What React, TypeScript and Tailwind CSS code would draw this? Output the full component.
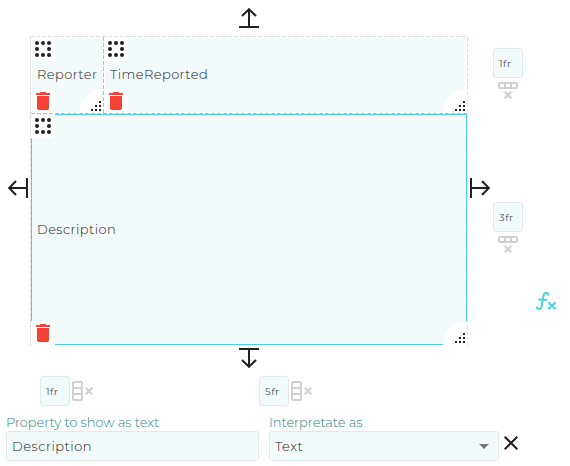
import React from "react";

function Handle() {
  return (
    <svg width="24" height="24" viewBox="0 0 24 24" className="absolute top-0 left-0 rounded-br-sm bg-white" fill="#212121">
      {[6, 12, 18].map((y) =>
        [6, 12, 18].map((x) => (x === 12 && y === 12 ? null : <circle key={`${x}-${y}`} cx={x} cy={y} r="2" />)),
      )}
    </svg>
  );
}

function Trash() {
  return (
    <svg width="24" height="24" viewBox="0 0 24 24" className="absolute bottom-0 left-0 rounded-tr-sm bg-white" fill="#f44336">
      <path d="M6 19c0 1.1.9 2 2 2h8c1.1 0 2-.9 2-2V7H6v12zM19 4h-3.5l-1-1h-5l-1 1H5v2h14V4z" />
    </svg>
  );
}

function Resize() {
  return (
    <svg width="24" height="24" viewBox="0 0 24 24" className="absolute right-0 bottom-0 rounded-tl-[24px] bg-white" fill="#212121" shapeRendering="crispEdges">
      <path d="M20 12h2v2h-2zM16 16h2v2h-2zM20 16h2v2h-2zM12 20h2v2h-2zM16 20h2v2h-2zM20 20h2v2h-2z" />
    </svg>
  );
}

function Cell({ label, className }: { label: string; className: string }) {
  return (
    <div className={`relative flex items-center border bg-[#f2fafc] pl-[5px] ${className}`}>
      <span className="text-[13px] font-light tracking-[0.42px] whitespace-nowrap text-[#212121]">{label}</span>
      <div className="absolute -inset-px">
        <Handle />
        <Trash />
        <Resize />
      </div>
    </div>
  );
}

function Arrow({ className }: { className: string }) {
  return (
    <svg width="20" height="20" viewBox="0 0 20 20" className={`shrink-0 ${className}`} fill="none" stroke="#212121" strokeWidth="2">
      <path d="M0 19h20M10 18V1.5M3 8l7-6.8L17 8" />
    </svg>
  );
}

function Fr({ value }: { value: string }) {
  return (
    <div className="flex h-[30px] w-[30px] shrink-0 items-center rounded-[3px] border border-[#e0eaec] bg-[#f2fafc] pl-[5px] text-[10px] tracking-[0.5px] text-[#4c5254]">
      {value}
    </div>
  );
}

function Cross() {
  return (
    <svg width="8" height="8" viewBox="0 0 8 8" className="shrink-0" stroke="#d0d0d0" strokeWidth="2">
      <path d="M.7.7l6.6 6.6M7.3.7L.7 7.3" />
    </svg>
  );
}

function RowTrack({ value }: { value: string }) {
  return (
    <div className="flex w-[30px] flex-col items-center">
      <Fr value={value} />
      <svg width="20" height="7" viewBox="0 0 20 7" className="mt-1 mb-0.5" fill="none" stroke="#d0d0d0" strokeWidth="2">
        <rect x="1" y="1" width="18" height="5" rx="1" />
        <path d="M7 1v5M13 1v5" />
      </svg>
      <Cross />
    </div>
  );
}

function ColumnTrack({ value }: { value: string }) {
  return (
    <div className="flex h-[30px] items-center">
      <Fr value={value} />
      <svg width="11" height="20" viewBox="0 0 11 20" className="mr-0.5 ml-0.5" fill="none" stroke="#d0d0d0" strokeWidth="2">
        <rect x="1" y="1" width="9" height="18" rx="1" />
        <path d="M1 7h9M1 13h9" />
      </svg>
      <Cross />
    </div>
  );
}

const dashX = "bg-[repeating-linear-gradient(90deg,#dedede_0_4px,transparent_4px_6px)]";
const dashY = "bg-[repeating-linear-gradient(180deg,#dedede_0_4px,transparent_4px_6px)]";

export default function App() {
  return (
    <div className="h-[466px] w-[570px] overflow-hidden bg-white font-[Montserrat,Inter,sans-serif]">
      <div className="flex h-9 w-[498px] justify-center pt-2">
        <Arrow className="" />
      </div>
      <div className="flex h-[310px]">
        <div className="flex w-[30px] shrink-0 items-start pt-[142px] pl-2">
          <Arrow className="-rotate-90" />
        </div>
        <div className="grid w-[438px] shrink-0 grid-cols-[1px_72px_1px_363px_1px] grid-rows-[1px_76px_1px_231px_1px]">
          <div className={`col-span-5 ${dashX}`} />
          <div className={`row-span-4 ${dashY}`} />
          <Cell label="Reporter" className="border-white" />
          <div className="bg-[repeating-linear-gradient(180deg,#bdbdbd_0_4px,transparent_4px_6px)]" />
          <Cell label="TimeReported" className="border-white" />
          <div className={`row-span-3 ${dashY}`} />
          <div className="col-span-3 bg-[repeating-linear-gradient(90deg,#bdbdbd_0_4px,transparent_4px_6px)]" />
          <Cell label="Description" className="col-span-3 border-[#4dd0e1]" />
          <div className={`col-span-5 ${dashX}`} />
        </div>
        <div className="flex w-[25px] shrink-0 items-start pt-[142px] pl-0.5">
          <Arrow className="rotate-90" />
        </div>
        <div className="flex w-[30px] shrink-0 flex-col gap-[103px] pt-3">
          <RowTrack value="1fr" />
          <RowTrack value="3fr" />
        </div>
        <div className="pt-[255px] pl-3">
          <svg width="22" height="22" viewBox="0 0 22 22" fill="none" stroke="#4dd0e1" strokeWidth="2">
            <path d="M13.6 4.6C13.6 1.4 9.2 1.2 8.6 4.4L6.6 15C6.1 18.6 2.2 18.8 1.6 15.8M3.3 8.8h9M13.2 11.2l7.4 7M20.6 11.2l-7.4 7" />
          </svg>
        </div>
      </div>
      <div className="flex h-[30px] w-[498px] justify-center pt-0.5">
        <Arrow className="rotate-180" />
      </div>
      <div className="flex gap-[166px] pl-10">
        <ColumnTrack value="1fr" />
        <ColumnTrack value="5fr" />
      </div>
      <div className="flex items-end pt-2 pl-1.5">
        <div className="w-[253px]">
          <div className="h-[17px] text-[13px] leading-4 font-light tracking-[-0.04px] whitespace-nowrap text-[#1f8289]">Property to show as text</div>
          <div className="flex h-[30px] items-center rounded-[3px] border border-[#e0eaec] bg-[#f2fafc] pt-0.5 pl-[5px] text-[13px] font-light tracking-[0.5px] text-[#212121]">
            Description
          </div>
        </div>
        <div className="ml-2.5 w-[230px]">
          <div className="h-[17px] text-[13px] leading-4 font-light tracking-[-0.04px] whitespace-nowrap text-[#1f8289]">Interpretate as</div>
          <div className="flex h-[30px] items-center justify-between rounded-[3px] border border-[#e0eaec] bg-[#f2fafc] pt-0.5 pr-[9px] pl-[5px] text-[13px] font-light tracking-[0.5px] text-[#212121]">
            Text
            <svg width="10" height="5" viewBox="0 0 10 5" className="-mt-0.5" fill="#757575">
              <path d="M0 0h10L5 5z" />
            </svg>
          </div>
        </div>
        <svg width="14" height="14" viewBox="0 0 14 14" className="mb-[11px] ml-[5px]" stroke="#212121" strokeWidth="2">
          <path d="M.7.7l12.6 12.6M13.3.7L.7 13.3" />
        </svg>
      </div>
    </div>
  );
}
